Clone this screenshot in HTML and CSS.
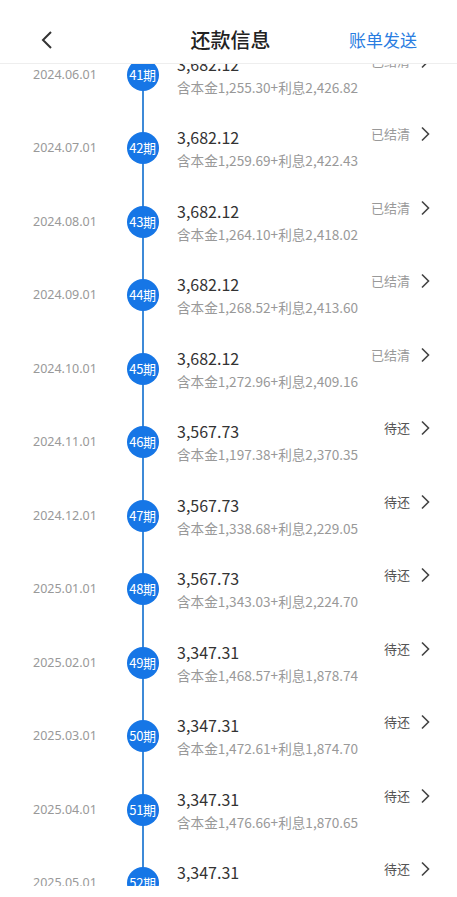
FILE: index.html
```html
<!DOCTYPE html>
<html lang="zh-CN">
<head>
<meta charset="utf-8">
<title>还款信息</title>
<link rel="stylesheet" href="styles.css">
</head>
<body>
<div class="app">
  <header class="nav">
    <span class="back"><svg width="14" height="20" viewBox="0 0 14 20"><polyline points="11,2 3,10 11,18" fill="none" stroke="#333" stroke-width="2" stroke-linejoin="miter"/></svg></span>
    <h1 class="title">还款信息</h1>
    <span class="send">账单发送</span>
  </header>
  <div class="viewport">
    <div class="list">
      <div class="row"><div class="date">2024.06.01</div><div class="node"><span class="dot">41期</span></div><div class="info"><div class="amt">3,682.12</div><div class="sub">含本金1,255.30+利息2,426.82</div></div><div class="status done">已结清</div><svg class="chev" width="10" height="16" viewBox="0 0 10 16"><polyline points="2,1.5 8.5,8 2,14.5" fill="none" stroke="#444" stroke-width="1.6"/></svg></div>
      <div class="row"><div class="date">2024.07.01</div><div class="node"><span class="dot">42期</span></div><div class="info"><div class="amt">3,682.12</div><div class="sub">含本金1,259.69+利息2,422.43</div></div><div class="status done">已结清</div><svg class="chev" width="10" height="16" viewBox="0 0 10 16"><polyline points="2,1.5 8.5,8 2,14.5" fill="none" stroke="#444" stroke-width="1.6"/></svg></div>
      <div class="row"><div class="date">2024.08.01</div><div class="node"><span class="dot">43期</span></div><div class="info"><div class="amt">3,682.12</div><div class="sub">含本金1,264.10+利息2,418.02</div></div><div class="status done">已结清</div><svg class="chev" width="10" height="16" viewBox="0 0 10 16"><polyline points="2,1.5 8.5,8 2,14.5" fill="none" stroke="#444" stroke-width="1.6"/></svg></div>
      <div class="row"><div class="date">2024.09.01</div><div class="node"><span class="dot">44期</span></div><div class="info"><div class="amt">3,682.12</div><div class="sub">含本金1,268.52+利息2,413.60</div></div><div class="status done">已结清</div><svg class="chev" width="10" height="16" viewBox="0 0 10 16"><polyline points="2,1.5 8.5,8 2,14.5" fill="none" stroke="#444" stroke-width="1.6"/></svg></div>
      <div class="row"><div class="date">2024.10.01</div><div class="node"><span class="dot">45期</span></div><div class="info"><div class="amt">3,682.12</div><div class="sub">含本金1,272.96+利息2,409.16</div></div><div class="status done">已结清</div><svg class="chev" width="10" height="16" viewBox="0 0 10 16"><polyline points="2,1.5 8.5,8 2,14.5" fill="none" stroke="#444" stroke-width="1.6"/></svg></div>
      <div class="row"><div class="date">2024.11.01</div><div class="node"><span class="dot">46期</span></div><div class="info"><div class="amt">3,567.73</div><div class="sub">含本金1,197.38+利息2,370.35</div></div><div class="status">待还</div><svg class="chev" width="10" height="16" viewBox="0 0 10 16"><polyline points="2,1.5 8.5,8 2,14.5" fill="none" stroke="#444" stroke-width="1.6"/></svg></div>
      <div class="row"><div class="date">2024.12.01</div><div class="node"><span class="dot">47期</span></div><div class="info"><div class="amt">3,567.73</div><div class="sub">含本金1,338.68+利息2,229.05</div></div><div class="status">待还</div><svg class="chev" width="10" height="16" viewBox="0 0 10 16"><polyline points="2,1.5 8.5,8 2,14.5" fill="none" stroke="#444" stroke-width="1.6"/></svg></div>
      <div class="row"><div class="date">2025.01.01</div><div class="node"><span class="dot">48期</span></div><div class="info"><div class="amt">3,567.73</div><div class="sub">含本金1,343.03+利息2,224.70</div></div><div class="status">待还</div><svg class="chev" width="10" height="16" viewBox="0 0 10 16"><polyline points="2,1.5 8.5,8 2,14.5" fill="none" stroke="#444" stroke-width="1.6"/></svg></div>
      <div class="row"><div class="date">2025.02.01</div><div class="node"><span class="dot">49期</span></div><div class="info"><div class="amt">3,347.31</div><div class="sub">含本金1,468.57+利息1,878.74</div></div><div class="status">待还</div><svg class="chev" width="10" height="16" viewBox="0 0 10 16"><polyline points="2,1.5 8.5,8 2,14.5" fill="none" stroke="#444" stroke-width="1.6"/></svg></div>
      <div class="row"><div class="date">2025.03.01</div><div class="node"><span class="dot">50期</span></div><div class="info"><div class="amt">3,347.31</div><div class="sub">含本金1,472.61+利息1,874.70</div></div><div class="status">待还</div><svg class="chev" width="10" height="16" viewBox="0 0 10 16"><polyline points="2,1.5 8.5,8 2,14.5" fill="none" stroke="#444" stroke-width="1.6"/></svg></div>
      <div class="row"><div class="date">2025.04.01</div><div class="node"><span class="dot">51期</span></div><div class="info"><div class="amt">3,347.31</div><div class="sub">含本金1,476.66+利息1,870.65</div></div><div class="status">待还</div><svg class="chev" width="10" height="16" viewBox="0 0 10 16"><polyline points="2,1.5 8.5,8 2,14.5" fill="none" stroke="#444" stroke-width="1.6"/></svg></div>
      <div class="row"><div class="date">2025.05.01</div><div class="node"><span class="dot">52期</span></div><div class="info"><div class="amt">3,347.31</div><div class="sub">含本金1,480.72+利息1,866.59</div></div><div class="status">待还</div><svg class="chev" width="10" height="16" viewBox="0 0 10 16"><polyline points="2,1.5 8.5,8 2,14.5" fill="none" stroke="#444" stroke-width="1.6"/></svg></div>
    </div>
  </div>
</div>
</body>
</html>
```
FILE: styles.css
```css
* { box-sizing: border-box; margin: 0; padding: 0; }
html, body { width: 457px; height: 897px; background: #fff; overflow: hidden; }
body {
  font-family: "Noto Sans CJK SC", "Noto Sans", sans-serif;
  color: #333;
}
.app { width: 457px; height: 897px; display: flex; flex-direction: column; }
.nav {
  height: 64px;
  flex: none;
  display: flex;
  align-items: center;
  padding: 16px 40px 0 40px;
  border-bottom: 1px solid #eeeeee;
}
.back { width: 14px; height: 20px; display: flex; }
.title {
  flex: 1;
  text-align: center;
  font-size: 20px;
  font-weight: 500;
  color: #222;
  line-height: 28px;
  padding-left: 58px;
}
.send {
  font-size: 17px;
  color: #2a7de1;
  line-height: 24px;
}
.viewport { height: 822px; overflow: hidden; flex: none; }
.list { margin-top: -26.25px; }
.row {
  height: 73.5px;
  display: flex;
  align-items: flex-start;
}
.date {
  width: 126px;
  padding-left: 33px;
  font-size: 12.5px;
  color: #999;
  line-height: 18px;
  margin-top: 27.75px;
  font-family: "Noto Sans", "Noto Sans CJK SC", sans-serif;
}
.node {
  width: 33px;
  height: 73.5px;
  position: relative;
  display: flex;
  align-items: center;
  justify-content: center;
}
.node::before {
  content: "";
  position: absolute;
  left: 15.5px;
  top: 0;
  bottom: 0;
  width: 2px;
  background: #3d8ad8;
}
.dot {
  position: relative;
  width: 32px;
  height: 32px;
  border-radius: 50%;
  background: #1676e6;
  color: #fff;
  font-size: 13px;
  line-height: 32px;
  text-align: center;
  letter-spacing: -0.3px;
}
.info { flex: 1; padding-left: 18px; padding-top: 14.75px; }
.amt { font-size: 16px; line-height: 22px; color: #333; }
.sub { font-size: 13.6px; line-height: 18px; color: #999; margin-top: 3px; }
.status {
  font-size: 13px;
  line-height: 18px;
  color: #555;
  margin-top: 13.75px;
}
.status.done { color: #999; }
.chev { margin-top: 14.75px; margin-left: 10px; margin-right: 27px; }
```
